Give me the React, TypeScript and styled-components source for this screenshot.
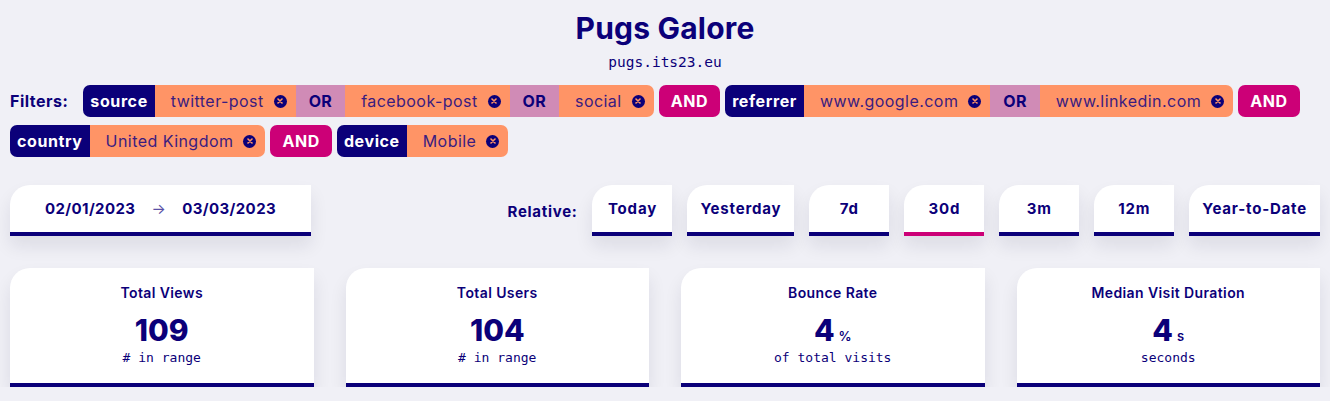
import styled, { createGlobalStyle } from 'styled-components';

const navy = '#0b0079';
const coral = '#ff9466';
const orPink = '#d08bb6';
const magenta = '#cc0077';

const GlobalStyle = createGlobalStyle`
    body {
        margin: 0;
        background: #f0f0f6;
        font-family: "Inter", "Noto Sans", sans-serif;
        color: ${navy};
    }
`;

const Page = styled.div`
    padding: 0 10px;
`;

const Header = styled.header`
    text-align: center;
    padding-top: 10px;
`;

const Title = styled.h1`
    margin: 0;
    font-size: 30px;
    line-height: 36px;
    font-weight: 700;
    letter-spacing: 0.2px;
`;

const Domain = styled.div`
    margin-top: 7px;
    font-family: "DejaVu Sans Mono", monospace;
    font-size: 14.5px;
    line-height: 18px;
`;

const Filters = styled.div`
    display: flex;
    flex-wrap: wrap;
    align-items: center;
    gap: 8px 5px;
    margin-top: 14px;
`;

const FiltersLabel = styled.span`
    font-weight: 700;
    font-size: 16px;
    letter-spacing: 0.5px;
    margin-right: 10px;
`;

const Group = styled.div`
    display: flex;
    height: 32px;
    border-radius: 7px;
    overflow: hidden;
`;

const Key = styled.span`
    display: flex;
    align-items: center;
    padding: 0 7px;
    background: ${navy};
    color: #fff;
    font-weight: 700;
    font-size: 16px;
    letter-spacing: 0.6px;
`;

const Value = styled.span`
    display: flex;
    align-items: center;
    gap: 10px;
    padding: 0 9px 0 16px;
    background: ${coral};
    color: #3a1c80;
    font-size: 16px;
    letter-spacing: 0.45px;
`;

const Close = styled.span`
    width: 13px;
    height: 13px;
    border-radius: 50%;
    background: ${navy};
    display: flex;
    align-items: center;
    justify-content: center;
`;

const Or = styled.span`
    display: flex;
    align-items: center;
    padding: 0 13px;
    background: ${orPink};
    font-weight: 700;
    font-size: 16px;
    letter-spacing: 0.3px;
`;

const And = styled.span`
    display: flex;
    align-items: center;
    height: 32px;
    padding: 0 12px;
    border-radius: 7px;
    background: ${magenta};
    color: #fff;
    font-weight: 700;
    font-size: 16px;
    letter-spacing: 0.6px;
`;

const RangeRow = styled.div`
    display: flex;
    justify-content: space-between;
    align-items: flex-start;
    margin-top: 28px;
`;

const Card = styled.div<{ $accent?: string }>`
    background: #fff;
    border-top-left-radius: 20px;
    border-bottom: 4px solid ${(p) => p.$accent ?? navy};
    box-shadow: 0 10px 18px rgba(20, 20, 60, 0.09);
`;

const DateCard = styled(Card)`
    width: 301px;
    height: 47px;
    display: flex;
    align-items: center;
    justify-content: center;
    gap: 16px;
    font-weight: 700;
    font-size: 15px;
    letter-spacing: 0.4px;
`;

const Arrow = styled.span`
    color: #5a4fa6;
    font-weight: 400;
    font-size: 15px;
`;

const Relative = styled.div`
    display: flex;
    gap: 15px;
    align-items: center;
`;

const RelLabel = styled.span`
    font-weight: 700;
    font-size: 15px;
    letter-spacing: 0.7px;
    padding-top: 2px;
`;

const RelButton = styled(Card)`
    min-width: 80px;
    box-sizing: border-box;
    height: 51px;
    padding: 0 13px;
    display: flex;
    align-items: center;
    justify-content: center;
    font-weight: 700;
    font-size: 15px;
    letter-spacing: 0.8px;
`;

const Stats = styled.div`
    display: grid;
    grid-template-columns: repeat(4, 1fr);
    gap: 32px;
    margin-top: 32px;
`;

const StatCard = styled(Card)`
    height: 119px;
    display: flex;
    flex-direction: column;
    align-items: center;
    padding-top: 16px;
    box-sizing: border-box;
`;

const StatTitle = styled.div`
    font-weight: 600;
    font-size: 14px;
    line-height: 18px;
    letter-spacing: 0.4px;
`;

const StatValue = styled.div`
    margin-top: 11px;
    font-weight: 800;
    font-size: 30px;
    line-height: 34px;
`;

const Unit = styled.span`
    font-size: 13px;
    line-height: 1;
    font-weight: 600;
    margin-left: 4px;
`;

const StatSub = styled.div`
    margin-top: 2px;
    font-family: "DejaVu Sans Mono", monospace;
    font-size: 13px;
    line-height: 18px;
`;

function CloseIcon() {
    return (
        <Close>
            <svg width="6" height="6" viewBox="0 0 6 6">
                <path d="M1 1L5 5M5 1L1 5" stroke={coral} strokeWidth="1.6" strokeLinecap="round" />
            </svg>
        </Close>
    );
}

type Filter = { key: string; values: string[] };

const filters: Filter[] = [
    { key: 'source', values: ['twitter-post', 'facebook-post', 'social'] },
    { key: 'referrer', values: ['www.google.com', 'www.linkedin.com'] },
    { key: 'country', values: ['United Kingdom'] },
    { key: 'device', values: ['Mobile'] },
];

const ranges = ['Today', 'Yesterday', '7d', '30d', '3m', '12m', 'Year-to-Date'];

const stats = [
    { title: 'Total Views', value: '109', unit: '', sub: '# in range' },
    { title: 'Total Users', value: '104', unit: '', sub: '# in range' },
    { title: 'Bounce Rate', value: '4', unit: '%', sub: 'of total visits' },
    { title: 'Median Visit Duration', value: '4', unit: 's', sub: 'seconds' },
];

export default function App() {
    return (
        <Page>
            <GlobalStyle />
            <Header>
                <Title>Pugs Galore</Title>
                <Domain>pugs.its23.eu</Domain>
            </Header>
            <Filters>
                <FiltersLabel>Filters:</FiltersLabel>
                {filters.map((f, i) => (
                    <>
                        <Group key={f.key}>
                            <Key>{f.key}</Key>
                            {f.values.map((v, j) => (
                                <>
                                    {j > 0 && <Or>OR</Or>}
                                    <Value key={v}>
                                        {v}
                                        <CloseIcon />
                                    </Value>
                                </>
                            ))}
                        </Group>
                        {i < filters.length - 1 && <And>AND</And>}
                    </>
                ))}
            </Filters>
            <RangeRow>
                <DateCard>
                    <span>02/01/2023</span>
                    <Arrow>→</Arrow>
                    <span>03/03/2023</span>
                </DateCard>
                <Relative>
                    <RelLabel>Relative:</RelLabel>
                    {ranges.map((r) => (
                        <RelButton key={r} $accent={r === '30d' ? magenta : navy}>
                            {r}
                        </RelButton>
                    ))}
                </Relative>
            </RangeRow>
            <Stats>
                {stats.map((s) => (
                    <StatCard key={s.title}>
                        <StatTitle>{s.title}</StatTitle>
                        <StatValue>
                            {s.value}
                            {s.unit && <Unit>{s.unit}</Unit>}
                        </StatValue>
                        <StatSub>{s.sub}</StatSub>
                    </StatCard>
                ))}
            </Stats>
        </Page>
    );
}
